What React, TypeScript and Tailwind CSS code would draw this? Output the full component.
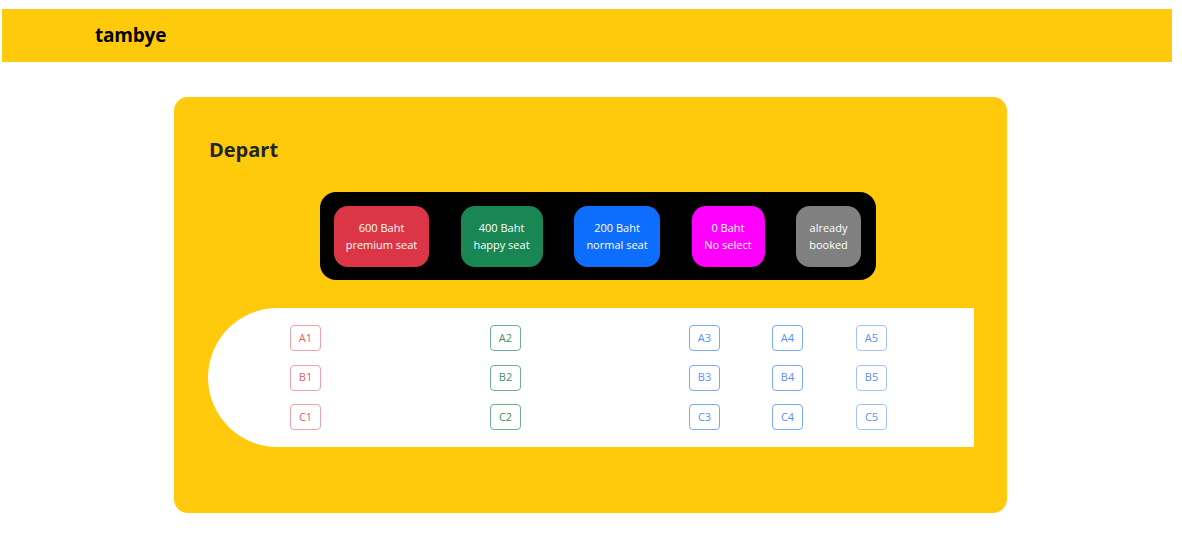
import React from "react";

const legend = [
  { top: "600 Baht", bottom: "premium seat", bg: "bg-[#dc3545]", w: "w-[95px]" },
  { top: "400 Baht", bottom: "happy seat", bg: "bg-[#198754]", w: "w-[82px]" },
  { top: "200 Baht", bottom: "normal seat", bg: "bg-[#0d6efd]", w: "w-[86px]" },
  { top: "0 Baht", bottom: "No select", bg: "bg-[#ff00ff]", w: "w-[73px]" },
  { top: "already", bottom: "booked", bg: "bg-[#808080]", w: "w-[65px]" },
];

const cols = [
  { n: 1, cls: "border-[#eea3aa] text-[#e0606c]", ml: "ml-[82px]" },
  { n: 2, cls: "border-[#6fae91] text-[#3f8f69]", ml: "ml-[169px]" },
  { n: 3, cls: "border-[#7ba9f8] text-[#5a8ef5]", ml: "ml-[168px]" },
  { n: 4, cls: "border-[#7ba9f8] text-[#5a8ef5]", ml: "ml-[52px]" },
  { n: 5, cls: "border-[#a3c2fb] text-[#5a8ef5]", ml: "ml-[53px]" },
];

export default function App() {
  return (
    <div className="min-h-[534px] bg-white font-['Open_Sans',sans-serif] text-[#212529]">
      <div className="pt-[9px] pl-[2px]">
        <div className="flex h-[53px] w-[1170px] items-center bg-[#ffca0b] pl-[93px]">
          <span className="text-[19px] font-bold tracking-[-0.2px] text-black">tambye</span>
        </div>
      </div>
      <div className="ml-[174px] mt-[35px] h-[416px] w-[833px] rounded-[14px] bg-[#ffca0b] pt-[39px]">
        <h1 className="pl-[35px] text-[20px] font-bold leading-[28px] text-[#212529]">Depart</h1>
        <div className="ml-[146px] mt-[28px] flex h-[88px] w-[556px] items-center justify-between rounded-[16px] bg-black pl-[14px] pr-[15px]">
          {legend.map((l) => (
            <div
              key={l.top}
              className={`${l.bg} ${l.w} flex h-[61px] flex-col items-center justify-center rounded-[14px] text-[11px] leading-[17px] text-white`}
            >
              <span>{l.top}</span>
              <span className="whitespace-nowrap">{l.bottom}</span>
            </div>
          ))}
        </div>
        <div className="ml-[34px] mt-[28px] flex h-[139px] w-[766px] items-center rounded-l-[70px] bg-white">
          {cols.map((c) => (
            <div key={c.n} className={`${c.ml} flex flex-col gap-[13.5px]`}>
              {["A", "B", "C"].map((r) => (
                <div
                  key={r}
                  className={`${c.cls} flex h-[26px] w-[31px] items-center justify-center rounded-[4px] border text-[11px]`}
                >
                  {r}
                  {c.n}
                </div>
              ))}
            </div>
          ))}
        </div>
      </div>
    </div>
  );
}
